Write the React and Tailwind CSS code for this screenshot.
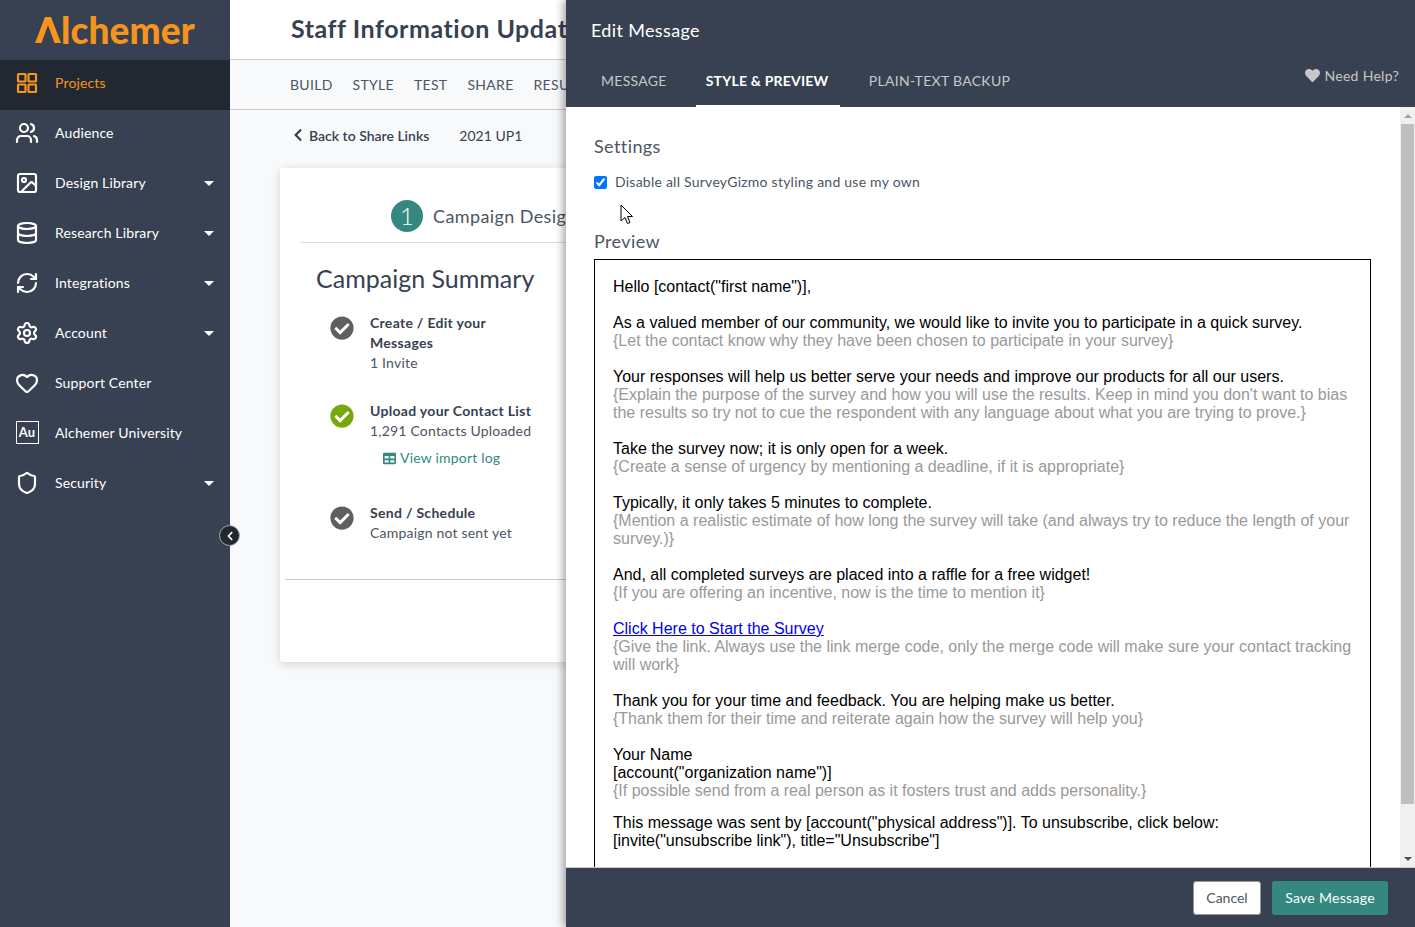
import React from 'react';
import { Users, Image, Database, RefreshCw, Settings, Heart, Shield } from 'lucide-react';
import { FaCheckCircle, FaChevronLeft, FaHeart, FaTable } from 'react-icons/fa';

function GridIcon() {
  return (
    <svg width="26" height="26" viewBox="0 0 24 24" fill="none" stroke="currentColor" strokeWidth="2.2">
      <rect x="3" y="3" width="7.5" height="7.5" rx="0.5" />
      <rect x="13.5" y="3" width="7.5" height="7.5" rx="0.5" />
      <rect x="3" y="13.5" width="7.5" height="7.5" rx="0.5" />
      <rect x="13.5" y="13.5" width="7.5" height="7.5" rx="0.5" />
    </svg>
  );
}

function AuIcon() {
  return (
    <div className="w-[23px] h-[23px] shrink-0 border border-white flex items-center justify-center text-[13px] font-bold text-white leading-none">
      Au
    </div>
  );
}

const navItems = [
  { label: 'Projects', icon: <GridIcon />, active: true },
  { label: 'Audience', icon: <Users size={26} strokeWidth={2.2} /> },
  { label: 'Design Library', icon: <Image size={26} strokeWidth={2.2} />, caret: true },
  { label: 'Research Library', icon: <Database size={26} strokeWidth={2.2} />, caret: true },
  { label: 'Integrations', icon: <RefreshCw size={26} strokeWidth={2.2} />, caret: true },
  { label: 'Account', icon: <Settings size={26} strokeWidth={2.2} />, caret: true },
  { label: 'Support Center', icon: <Heart size={26} strokeWidth={2.2} /> },
  { label: 'Alchemer University', icon: <AuIcon /> },
  { label: 'Security', icon: <Shield size={26} strokeWidth={2.2} />, caret: true },
];

function Sidebar() {
  return (
    <aside className="w-[230px] shrink-0 bg-[#374151] flex flex-col">
      <div className="h-[60px] flex items-center pl-[35px] pb-[1px]">
        <svg width="26" height="26" viewBox="0 0 26 26" className="shrink-0">
          <polygon points="0,26 10,0 16,0 26,26 19.5,26 13,8 6.5,26" fill="#f7941d" />
        </svg>
        <span className="text-[37px] font-black text-[#f7941d] leading-none tracking-[0.1px]">lchemer</span>
      </div>
      {navItems.map((item) => (
        <div
          key={item.label}
          className={`h-[50px] flex items-center pl-[15px] pr-[16px] pb-[5px] text-[14px] tracking-[0.15px] ${
            item.active ? 'bg-[#212832] text-[#f7941d]' : 'text-white'
          }`}
        >
          <span className="w-[24px] flex justify-center shrink-0">{item.icon}</span>
          <span className="ml-[16px] flex-1">{item.label}</span>
          {item.caret && (
            <span className="w-0 h-0 border-x-[5.5px] border-x-transparent border-t-[5.5px] border-t-white mt-[2px]" />
          )}
        </div>
      ))}
    </aside>
  );
}

function SummaryRow({ color, title, children }) {
  return (
    <div className="flex">
      <FaCheckCircle size={24} color={color} className="ml-[30px] mt-[3px] shrink-0" />
      <div className="ml-[16px] text-[14px] leading-[20px] tracking-[0.2px] text-[#4b5563] w-[170px]">
        <div className="font-bold text-[#374151] tracking-[0.3px]">{title}</div>
        {children}
      </div>
    </div>
  );
}

function Background() {
  return (
    <main className="flex-1 min-w-0 bg-[#f8f9fb] flex flex-col">
      <div className="h-[60px] bg-white border-b border-[#ccc] flex items-center pl-[61px] pb-[2px] text-[25px] font-bold tracking-[0.55px] text-[#374151] whitespace-nowrap shrink-0">
        Staff Information Update
      </div>
      <nav className="h-[50px] border-b border-[#ccc] flex items-center pl-[60px] gap-[20px] text-[14px] text-[#4b5563] shrink-0 tracking-[0.3px]">
        <span>BUILD</span>
        <span>STYLE</span>
        <span>TEST</span>
        <span>SHARE</span>
        <span>RESULTS</span>
      </nav>
      <div className="h-[58px] flex items-center pl-[61px] pb-[8px] text-[14px] text-[#374151] shrink-0">
        <FaChevronLeft size={14} />
        <span className="ml-[4px] font-semibold">Back to Share Links</span>
        <span className="ml-[30px]">2021 UP1</span>
      </div>
      <section className="ml-[50px] w-[600px] h-[494px] bg-white rounded-[3px] shadow-[0_2px_10px_rgba(0,0,0,0.15)] shrink-0">
        <div className="ml-[20px] h-[75px] border-b border-[#ddd] flex items-center pl-[91px] pt-[27px] pb-[5px]">
          <span className="w-[32px] h-[32px] rounded-full bg-[#348880] text-white flex items-center justify-center text-[24px] font-light">1</span>
          <span className="ml-[10px] text-[18px] tracking-[0.4px] text-[#4b5563]">Campaign Design</span>
        </div>
        <h2 className="ml-[36px] mt-[18px] text-[25px] leading-[34px] text-[#374151]">Campaign Summary</h2>
        <div className="mt-[18px] ml-[20px]">
          <SummaryRow color="#5f5f5f" title="Create / Edit your Messages">
            <div>1 Invite</div>
          </SummaryRow>
          <div className="mt-[28px]">
            <SummaryRow color="#78a70c" title="Upload your Contact List">
              <div className="whitespace-nowrap">1,291 Contacts Uploaded</div>
              <div className="mt-[7px] ml-[13px] flex items-center text-[#348880] whitespace-nowrap">
                <FaTable size={13} />
                <span className="ml-[4px]">View import log</span>
              </div>
            </SummaryRow>
          </div>
          <div className="mt-[35px]">
            <SummaryRow color="#5f5f5f" title="Send / Schedule">
              <div className="whitespace-nowrap">Campaign not sent yet</div>
            </SummaryRow>
          </div>
        </div>
        <div className="ml-[5px] mt-[36px] border-t border-[#ccc]" />
      </section>
    </main>
  );
}

const paragraphs = [
  { lines: ['Hello [contact("first name")],'] },
  { lines: ['As a valued member of our community, we would like to invite you to participate in a quick survey.'], hint: '{Let the contact know why they have been chosen to participate in your survey}' },
  { lines: ['Your responses will help us better serve your needs and improve our products for all our users.'], hint: "{Explain the purpose of the survey and how you will use the results. Keep in mind you don't want to bias the results so try not to cue the respondent with any language about what you are trying to prove.}" },
  { lines: ['Take the survey now; it is only open for a week.'], hint: '{Create a sense of urgency by mentioning a deadline, if it is appropriate}' },
  { lines: ['Typically, it only takes 5 minutes to complete.'], hint: '{Mention a realistic estimate of how long the survey will take (and always try to reduce the length of your survey.)}' },
  { lines: ['And, all completed surveys are placed into a raffle for a free widget!'], hint: '{If you are offering an incentive, now is the time to mention it}' },
  { link: 'Click Here to Start the Survey', hint: '{Give the link. Always use the link merge code, only the merge code will make sure your contact tracking will work}' },
  { lines: ['Thank you for your time and feedback. You are helping make us better.'], hint: '{Thank them for their time and reiterate again how the survey will help you}' },
  { lines: ['Your Name', '[account("organization name")]'], hint: '{If possible send from a real person as it fosters trust and adds personality.}', tight: true },
  { lines: ['This message was sent by [account("physical address")]. To unsubscribe, click below:', '[invite("unsubscribe link"), title="Unsubscribe"]'] },
];

function EmailPreview() {
  return (
    <div className="mt-[6px] h-[640px] border border-black pt-[18px] px-[18px] font-['Liberation_Sans'] text-[16px] leading-[18px] tracking-normal text-black">
      {paragraphs.map((p, i) => (
        <div key={i} className={p.tight ? 'mb-[14px]' : 'mb-[18px]'}>
          {p.link && <a className="text-[#0000ee] underline">{p.link}</a>}
          {p.lines && p.lines.map((line) => <div key={line}>{line}</div>)}
          {p.hint && <div className="text-[#999]">{p.hint}</div>}
        </div>
      ))}
    </div>
  );
}

function EditPanel() {
  return (
    <div className="absolute top-0 bottom-0 left-[566px] right-0 flex flex-col shadow-[-3px_0_8px_rgba(0,0,0,0.35)] bg-white">
      <header className="h-[107px] bg-[#374151] shrink-0 relative">
        <div className="h-[62px] flex items-center pl-[25px] text-[18px] tracking-[0.35px] pb-[2px] text-white">Edit Message</div>
        <div className="h-[45px] flex items-stretch pl-[25px] text-[14px] text-[#c8c8c8] tracking-[0.3px] whitespace-nowrap">
          <div className="px-[10px] pb-[8px] flex items-center">MESSAGE</div>
          <div className="ml-[19px] px-[10px] pb-[6px] flex items-center w-[144px] font-bold tracking-[0.2px] text-white border-b-2 border-white">STYLE &amp; PREVIEW</div>
          <div className="ml-[19px] px-[10px] pb-[8px] flex items-center">PLAIN-TEXT BACKUP</div>
        </div>
        <div className="absolute right-[16px] top-[65px] flex items-center text-[14px] tracking-[0.3px] text-[#c8c8c8]">
          <FaHeart size={15} />
          <span className="ml-[4px]">Need Help?</span>
        </div>
      </header>

      <div className="flex-1 min-h-0 flex">
        <div className="flex-1 min-w-0 overflow-hidden pl-[28px] pr-[29px] pt-[27px]">
          <h3 className="text-[18px] leading-[24px] tracking-[0.4px] text-[#4b5563]">Settings</h3>
          <label className="mt-[14px] flex items-center text-[14px] leading-[20px] tracking-[0.24px] text-[#4b5563]">
            <input type="checkbox" defaultChecked className="w-[13px] h-[13px] accent-[#0075ff]" />
            <span className="ml-[8px]">Disable all SurveyGizmo styling and use my own</span>
          </label>
          <div className="h-[23px] mt-[7px] pl-[26px] pt-[5px]">
            <svg width="14" height="20" viewBox="0 0 14 20" className="overflow-visible">
              <path d="M1 1 L1 17 L5 13.5 L7.5 19.5 L10 18.5 L7.5 12.5 L12.5 12.5 Z" fill="#fff" stroke="#000" strokeWidth="1" />
            </svg>
          </div>
          <h3 className="mt-[7px] text-[18px] leading-[24px] tracking-[0.4px] text-[#4b5563]">Preview</h3>
          <EmailPreview />
        </div>
        {/* Scrollbar */}
        <div className="w-[15px] shrink-0 bg-[#f0f0f0] flex flex-col items-center">
          <div className="h-[17px] flex items-center">
            <span className="w-0 h-0 border-x-[4px] border-x-transparent border-b-[4px] border-b-[#a3a3a3]" />
          </div>
          <div className="w-[13px] h-[680px] bg-[#bfbfbf]" />
          <div className="flex-1 flex items-end pb-[6px]">
            <span className="w-0 h-0 border-x-[4px] border-x-transparent border-t-[4px] border-t-[#505050]" />
          </div>
        </div>
      </div>

      <footer className="h-[60px] shrink-0 bg-[#374151] border-t border-[#ccc] flex items-center justify-end pr-[27px] gap-[11px] text-[14px]">
        <button className="w-[68px] h-[34px] bg-white border border-[#999] rounded-[3px] text-[#4b5563]">Cancel</button>
        <button className="w-[116px] h-[34px] bg-[#348880] rounded-[3px] tracking-[0.3px] text-white">Save Message</button>
      </footer>
    </div>
  );
}

export default function App() {
  return (
    <div className="relative w-[1415px] h-[927px] overflow-hidden flex font-['Lato',sans-serif]">
      <Sidebar />
      <Background />
      <button className="absolute left-[219px] top-[525px] w-[21px] h-[21px] rounded-full bg-[#212832] border border-[#aaa] flex items-center justify-center text-white">
        <FaChevronLeft size={10} />
      </button>
      <EditPanel />
    </div>
  );
}
